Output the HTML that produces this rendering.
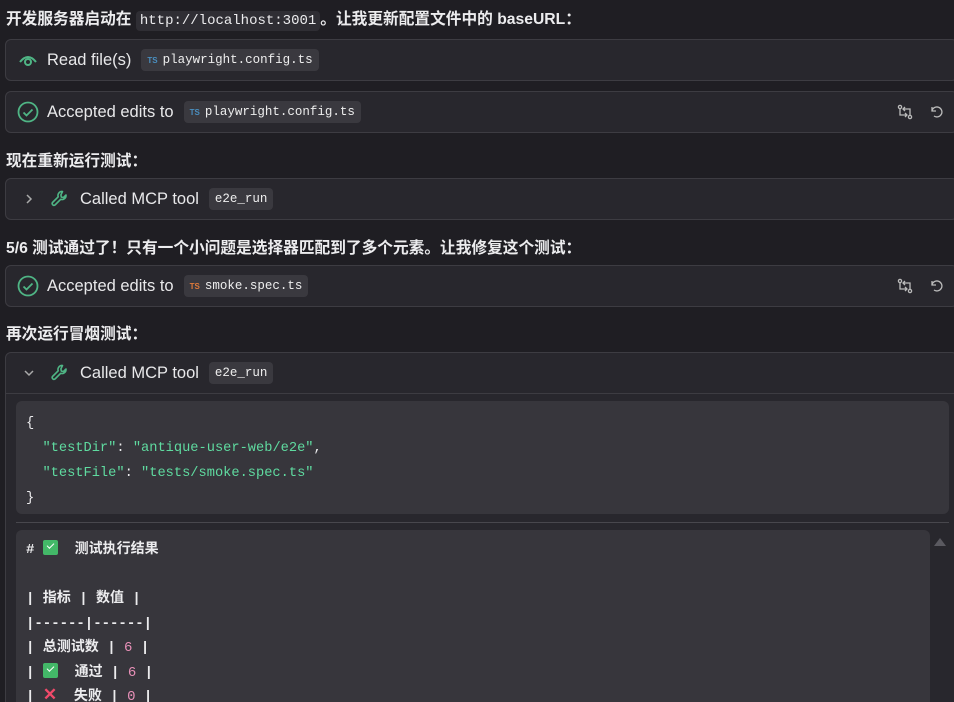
<!DOCTYPE html>
<html style="width:954px;height:702px;overflow:hidden"><head><meta charset="utf-8"><style>
*{box-sizing:border-box;margin:0;padding:0}
body{width:954px;height:702px;overflow:hidden;background:#1f1e23;color:#e6e6e8;font-family:"Liberation Sans","Noto Sans CJK SC",sans-serif;position:relative}
.p{position:absolute;left:6px;font-size:15.7px;font-weight:bold;color:#ececee;white-space:nowrap}
.card{position:absolute;left:5px;right:-4px;background:#28272d;border:1px solid #3d3c42;border-radius:6px}
.row{position:absolute;left:0;top:0;height:40px;display:flex;align-items:center;font-size:16.5px;color:#e8e8ea}
.chip{background:#3a393f;border-radius:4px;font-family:"Liberation Mono",monospace;font-size:12.5px;padding:4px 6px;margin-left:10px;color:#eee;display:flex;align-items:center}
.ts{font-family:"Liberation Sans",sans-serif;font-size:8px;font-weight:bold;margin-right:5px}
.code{font-family:"Liberation Mono","Noto Sans CJK SC",monospace;font-size:13.7px;color:#ececee}
.ic{position:absolute}
.cb{display:inline-block;width:15px;height:15px;background:#43b868;border-radius:2px;vertical-align:-2px;position:relative}
.cb:after{content:"";position:absolute;left:4px;top:3px;width:6px;height:3px;border-left:1.5px solid #fff;border-bottom:1.5px solid #fff;transform:rotate(-45deg)}
</style></head><body>
<div class="p" style="top:6px">开发服务器启动在 <span style="font-family:'Liberation Mono',monospace;font-weight:normal;font-size:14px;background:#2f2e34;border-radius:4px;padding:2px 4px">http://localhost:3001</span>。让我更新配置文件中的 baseURL：</div>

<div class="card" style="top:39px;height:42px">
 <div class="row" style="left:12px">
  <svg width="20" height="16" viewBox="0 0 20 16"><path d="M2 10 Q10 0 18 10" stroke="#4fb585" stroke-width="2" fill="none"/><circle cx="10" cy="10" r="3" stroke="#4fb585" stroke-width="2" fill="none"/></svg>
  <span style="margin-left:9px">Read file(s)</span>
  <span class="chip"><span class="ts" style="color:#4a8fc0">TS</span>playwright.config.ts</span>
 </div>
</div>

<div class="card" style="top:91px;height:42px">
 <div class="row" style="left:11px">
  <svg width="22" height="22" viewBox="0 0 22 22"><circle cx="11" cy="11" r="9.5" stroke="#4fb585" stroke-width="1.8" fill="none"/><path d="M6.5 11.5l3 3 6-6" stroke="#4fb585" stroke-width="1.8" fill="none"/></svg>
  <span style="margin-left:8px">Accepted edits to</span>
  <span class="chip"><span class="ts" style="color:#4a8fc0">TS</span>playwright.config.ts</span>
 </div>
 <svg class="ic" style="left:891px;top:12px" width="16" height="16" viewBox="0 0 16 16" fill="none" stroke="#bbb" stroke-width="1.3"><circle cx="3" cy="3" r="1.6"/><circle cx="13" cy="13" r="1.6"/><path d="M3 5v6h7M8 9l2 2-2 2M13 11V5H6M8 3 6 5l2 2"/></svg>
 <svg class="ic" style="left:923px;top:13px" width="14" height="14" viewBox="0 0 14 14" fill="none" stroke="#bbb" stroke-width="1.3"><path d="M3 2v4h4"/><path d="M3 6a5 5 0 1 1 2 5"/></svg>
</div>

<div class="p" style="top:148px">现在重新运行测试：</div>

<div class="card" style="top:178px;height:42px">
 <div class="row" style="left:18px">
  <svg width="10" height="12" viewBox="0 0 10 12"><path d="M3 2l4 4-4 4" stroke="#aaa" stroke-width="1.5" fill="none"/></svg>
  <svg style="margin-left:16px" width="20" height="20" viewBox="0 0 20 20"><path d="M12.5 2.5a4 4 0 0 0-4.3 5.3L2.5 13.5a1.8 1.8 0 0 0 2.5 2.5l5.7-5.7a4 4 0 0 0 5.3-4.3l-2.5 2.5-2.2-.4-.4-2.2z" stroke="#4fb585" stroke-width="1.6" fill="none" stroke-linejoin="round"/></svg>
  <span style="margin-left:10px">Called MCP tool</span>
  <span class="chip">e2e_run</span>
 </div>
</div>

<div class="p" style="top:235px">5/6 测试通过了！只有一个小问题是选择器匹配到了多个元素。让我修复这个测试：</div>

<div class="card" style="top:265px;height:42px">
 <div class="row" style="left:11px">
  <svg width="22" height="22" viewBox="0 0 22 22"><circle cx="11" cy="11" r="9.5" stroke="#4fb585" stroke-width="1.8" fill="none"/><path d="M6.5 11.5l3 3 6-6" stroke="#4fb585" stroke-width="1.8" fill="none"/></svg>
  <span style="margin-left:8px">Accepted edits to</span>
  <span class="chip"><span class="ts" style="color:#e07a3a">TS</span>smoke.spec.ts</span>
 </div>
 <svg class="ic" style="left:891px;top:12px" width="16" height="16" viewBox="0 0 16 16" fill="none" stroke="#bbb" stroke-width="1.3"><circle cx="3" cy="3" r="1.6"/><circle cx="13" cy="13" r="1.6"/><path d="M3 5v6h7M8 9l2 2-2 2M13 11V5H6M8 3 6 5l2 2"/></svg>
 <svg class="ic" style="left:923px;top:13px" width="14" height="14" viewBox="0 0 14 14" fill="none" stroke="#bbb" stroke-width="1.3"><path d="M3 2v4h4"/><path d="M3 6a5 5 0 1 1 2 5"/></svg>
</div>

<div class="p" style="top:321px">再次运行冒烟测试：</div>

<div class="card" style="top:352px;height:360px">
 <div class="row" style="left:17px">
  <svg width="12" height="10" viewBox="0 0 12 10"><path d="M2 3l4 4 4-4" stroke="#aaa" stroke-width="1.5" fill="none"/></svg>
  <svg style="margin-left:15px" width="20" height="20" viewBox="0 0 20 20"><path d="M12.5 2.5a4 4 0 0 0-4.3 5.3L2.5 13.5a1.8 1.8 0 0 0 2.5 2.5l5.7-5.7a4 4 0 0 0 5.3-4.3l-2.5 2.5-2.2-.4-.4-2.2z" stroke="#4fb585" stroke-width="1.6" fill="none" stroke-linejoin="round"/></svg>
  <span style="margin-left:10px">Called MCP tool</span>
  <span class="chip">e2e_run</span>
 </div>
 <div style="position:absolute;left:0;right:0;top:40px;border-top:1px solid #3d3c42"></div>
 <div class="code" style="position:absolute;left:10px;width:933px;top:48px;height:113px;background:#37363c;border-radius:6px;padding:10px 10px;line-height:25px">
  {<br>&nbsp;&nbsp;<span style="color:#5fdba0">"testDir"</span>: <span style="color:#5fdba0">"antique-user-web/e2e"</span>,<br>&nbsp;&nbsp;<span style="color:#5fdba0">"testFile"</span>: <span style="color:#5fdba0">"tests/smoke.spec.ts"</span><br>}
 </div>
 <div style="position:absolute;left:10px;width:933px;top:169px;border-top:1px solid #48474d"></div>
 <div class="code" style="position:absolute;left:10px;width:914px;top:177px;height:200px;background:#37363c;border-radius:6px;padding:8px 10px;line-height:24.5px;font-weight:bold;font-size:14px">
  # <span class="cb"></span>&nbsp; 测试执行结果<br><br>
  | 指标 | 数值 |<br>
  |------|------|<br>
  | 总测试数 | <span style="color:#e890b8;font-weight:normal">6</span> |<br>
  | <span class="cb"></span>&nbsp; 通过 | <span style="color:#e890b8;font-weight:normal">6</span> |<br>
  | <span style="color:#f04a6a;font-size:17px">✕</span>&nbsp; 失败 | <span style="color:#e890b8;font-weight:normal">0</span> |
 </div>
 <svg class="ic" style="left:927px;top:184px" width="14" height="10" viewBox="0 0 14 10"><path d="M7 1l6 8H1z" fill="#5a5960"/></svg>
</div>
</body></html>
